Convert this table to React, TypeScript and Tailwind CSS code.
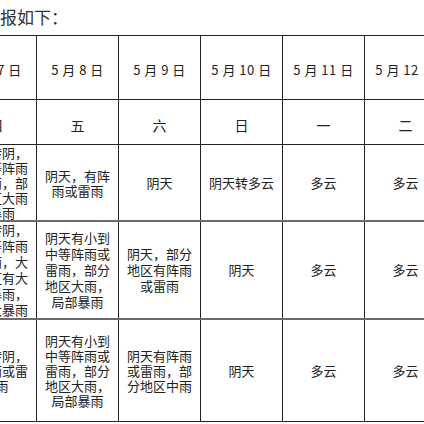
const cols = [
  "5 月 7 日",
  "5 月 8 日",
  "5 月 9 日",
  "5 月 10 日",
  "5 月 11 日",
  "5 月 12 日",
];

const weekdays = ["四", "五", "六", "日", "一", "二"];

const rows: { height: string; leading: string; thick: boolean; cells: string[][] }[] = [
  {
    height: "h-[76px]",
    leading: "leading-[15px]",
    thick: false,
    cells: [
      ["多云转阴，", "有中等阵雨", "或雷雨，部", "分地区大雨", "到暴雨"],
      ["阴天，有阵", "雨或雷雨"],
      ["阴天"],
      ["阴天转多云"],
      ["多云"],
      ["多云"],
    ],
  },
  {
    height: "h-[98px]",
    leading: "leading-[16px]",
    thick: true,
    cells: [
      ["多云转阴，", "有中等阵雨", "或雷雨，大", "部地区有大", "雨到暴雨，", "局部大暴雨"],
      ["阴天有小到", "中等阵雨或", "雷雨，部分", "地区大雨，", "局部暴雨"],
      ["阴天，部分", "地区有阵雨", "或雷雨"],
      ["阴天"],
      ["多云"],
      ["多云"],
    ],
  },
  {
    height: "h-[102px]",
    leading: "leading-[15px]",
    thick: true,
    cells: [
      ["多云转阴，", "有中雨或雷", "阵雨"],
      ["阴天有小到", "中等阵雨或", "雷雨，部分", "地区大雨，", "局部暴雨"],
      ["阴天有阵雨", "或雷雨，部", "分地区中雨"],
      ["阴天"],
      ["多云"],
      ["多云"],
    ],
  },
];

const font = { fontFamily: '"Noto Sans CJK SC", "Noto Sans", sans-serif' };

export default function App() {
  return (
    <div className="w-[424px] h-[424px] overflow-hidden bg-white text-[#222]" style={font}>
      <div className="h-[35px] pt-[6px] text-[17px] leading-[22px] text-[#333]">报如下：</div>
      <table className="-ml-[46px] w-[492px] table-fixed border-collapse text-center text-[13px]">
        <colgroup>
          {cols.map((c) => (
            <col key={c} className="w-[82px]" />
          ))}
        </colgroup>
        <tbody>
          <tr className="h-[64px]">
            {cols.map((c) => (
              <td key={c} className="border border-[#222] p-0 pt-[4px] align-middle tracking-[0.5px]">
                {c}
              </td>
            ))}
          </tr>
          <tr className="h-[45px]">
            {weekdays.map((d) => (
              <td key={d} className="border border-[#222] p-0 pt-[6px] align-middle text-[14px]">
                {d}
              </td>
            ))}
          </tr>
          {rows.map((row, i) => (
            <tr key={i} className={row.height}>
              {row.cells.map((lines, j) => (
                <td
                  key={j}
                  className={
                    row.thick
                      ? "border border-[#222] border-t-2 border-t-[#6b6b6b] p-0 align-middle " + row.leading
                      : "border border-[#222] p-0 align-middle " + row.leading
                  }
                >
                  {lines.map((l, k) => (
                    <div key={k}>{l}</div>
                  ))}
                </td>
              ))}
            </tr>
          ))}
        </tbody>
      </table>
    </div>
  );
}
